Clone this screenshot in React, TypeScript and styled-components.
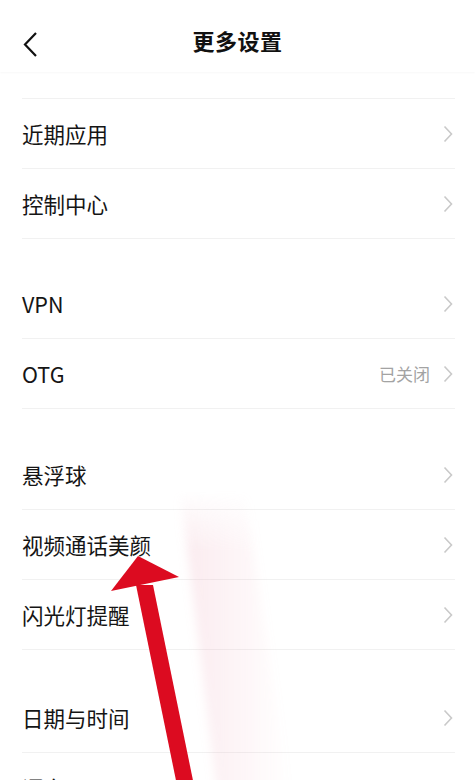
import React from 'react';
import styled, { createGlobalStyle } from 'styled-components';

const GlobalStyle = createGlobalStyle`
  html, body {
    margin: 0;
    padding: 0;
    overflow: hidden;
    background: #fff;
  }
  body {
    font-family: 'Noto Sans CJK SC', 'Noto Sans', sans-serif;
  }
`;

const Page = styled.div`
  position: relative;
  width: 475px;
  height: 780px;
  overflow: hidden;
  background: #fff;
  color: #161616;
`;

const Header = styled.div`
  height: 72px;
  display: flex;
  align-items: center;
  justify-content: center;
  position: relative;
  background: #fff;
  box-shadow: 0 1px 2px rgba(0, 0, 0, 0.03);
`;

const BackButton = styled.div`
  position: absolute;
  left: 22px;
  top: 29px;
  width: 20px;
  height: 30px;
  display: flex;
  align-items: center;
`;

const Title = styled.div`
  font-size: 22px;
  font-weight: 700;
  letter-spacing: 0.5px;
  color: #111;
  margin-top: 8px;
`;

const TopSpacer = styled.div`
  height: 26px;
  margin: 0 20px 0 22px;
  border-bottom: 1px solid #f1f1f1;
`;

const Group = styled.div<{ $gap?: number }>`
  margin-top: ${p => p.$gap ?? 0}px;
`;

const Row = styled.div`
  height: 69px;
  margin: 0 20px 0 22px;
  display: flex;
  align-items: center;
  border-bottom: 1px solid #f1f1f1;
`;

const Label = styled.div`
  flex: 1;
  font-size: 21.5px;
  color: #151515;
`;

const Value = styled.div`
  font-size: 17px;
  color: #a3a3a3;
  margin-right: 12px;
`;

const Chevron = styled.svg`
  width: 12px;
  height: 18px;
  margin-right: 1px;
`;

const ArrowLayer = styled.svg`
  position: absolute;
  left: 0;
  top: 0;
  pointer-events: none;
`;

type Item = { label: string; value?: string };

const groups: { gap: number; items: Item[] }[] = [
  { gap: 0, items: [{ label: '近期应用' }, { label: '控制中心' }] },
  { gap: 30, items: [{ label: 'VPN' }, { label: 'OTG', value: '已关闭' }] },
  { gap: 31, items: [{ label: '悬浮球' }, { label: '视频通话美颜' }, { label: '闪光灯提醒' }] },
  { gap: 33, items: [{ label: '日期与时间' }, { label: '语言', value: '简体中文' }] },
];

const RightArrow = () => (
  <Chevron viewBox="0 0 12 18">
    <path d="M2.5 1.5 L9.5 9 L2.5 16.5" fill="none" stroke="#c9c9c9" strokeWidth="1.6" />
  </Chevron>
);

const App = () => {
  return (
    <Page>
      <GlobalStyle />
      <Header>
        <BackButton>
          <svg width="16" height="26" viewBox="0 0 16 26">
            <path d="M14 2 L3 13.5 L14 25" fill="none" stroke="#111" strokeWidth="2.2" />
          </svg>
        </BackButton>
        <Title>更多设置</Title>
      </Header>
      <TopSpacer />
      {groups.map((g, gi) => (
        <Group key={gi} $gap={g.gap}>
          {g.items.map(item => (
            <Row key={item.label}>
              <Label>{item.label}</Label>
              {item.value && <Value>{item.value}</Value>}
              <RightArrow />
            </Row>
          ))}
        </Group>
      ))}
      <ArrowLayer width="475" height="780" viewBox="0 0 475 780">
        <defs>
          <linearGradient id="glow" x1="0" y1="0" x2="1" y2="0">
            <stop offset="0" stopColor="#f0b4c2" stopOpacity="0.28" />
            <stop offset="1" stopColor="#f0b4c2" stopOpacity="0" />
          </linearGradient>
          <linearGradient id="fade" x1="0" y1="0" x2="0" y2="1">
            <stop offset="0" stopColor="#fff" stopOpacity="0" />
            <stop offset="0.2" stopColor="#fff" stopOpacity="1" />
            <stop offset="1" stopColor="#fff" stopOpacity="1" />
          </linearGradient>
          <mask id="fadeMask" maskUnits="userSpaceOnUse" x="0" y="0" width="475" height="780">
            <rect x="0" y="490" width="475" height="310" fill="url(#fade)" />
          </mask>
          <filter id="soft" x="-50%" y="-50%" width="200%" height="200%">
            <feGaussianBlur stdDeviation="5" />
          </filter>
        </defs>
        <g mask="url(#fadeMask)">
          <polygon
            points="180,490 245,490 290,800 218,800"
            fill="url(#glow)"
            filter="url(#soft)"
          />
        </g>
        <polygon points="136,585 153,585 197,800 180,800" fill="#dc0b20" />
        <polygon points="138,556 179,577 111,591" fill="#dc0b20" />
      </ArrowLayer>
    </Page>
  );
};

export default App;
